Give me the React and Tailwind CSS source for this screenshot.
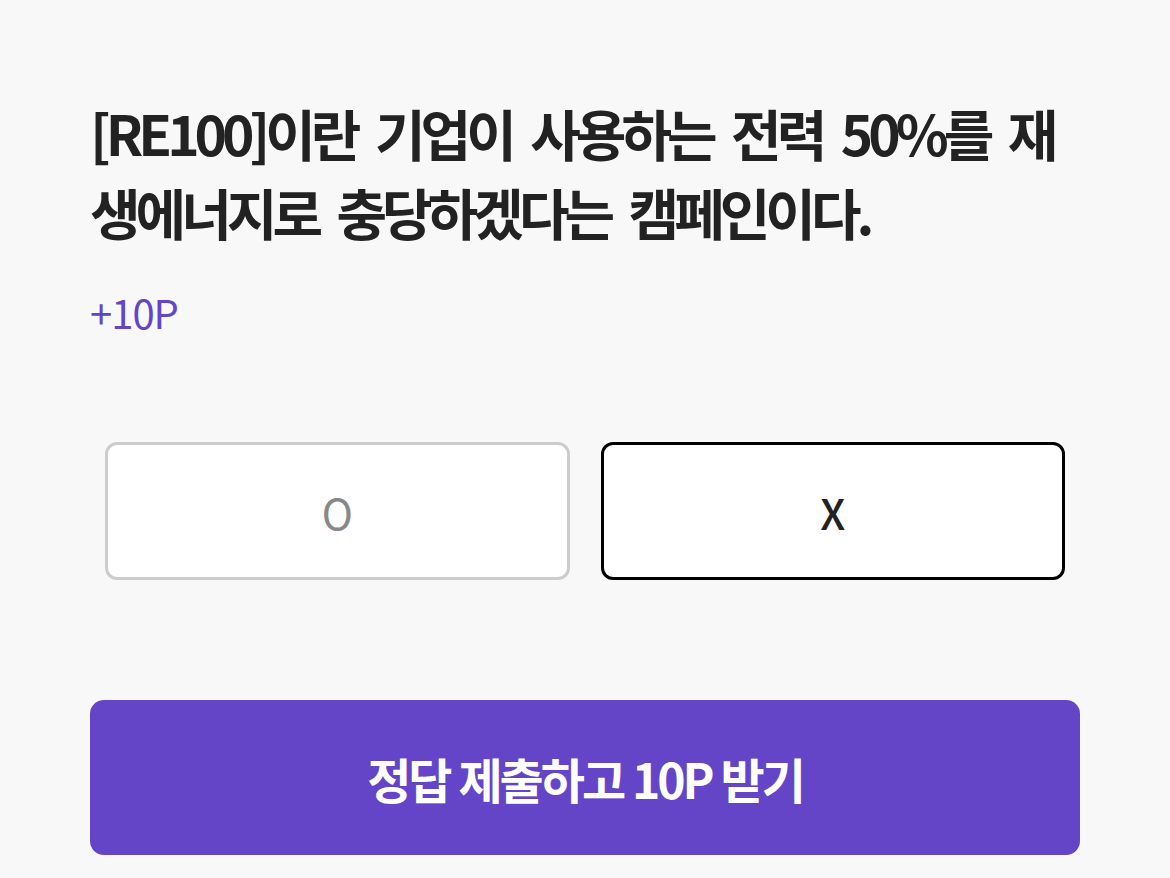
import React, { useState } from "react";

const FONT = { fontFamily: '"Noto Sans CJK KR", "Noto Sans", sans-serif' };

export default function App() {
  const [answer, setAnswer] = useState("X");

  return (
    <div className="min-h-screen bg-[#f8f8f8] px-[90px] pt-[93px]" style={FONT}>
      {/* Question */}
      <h1 className="text-[55px] font-bold leading-[79px] tracking-[-5px] [word-spacing:11px] text-[#222222]">
        [RE100]이란 기업이 사용하는 전력 50%를 재생에너지로 충당하겠다는 캠페인이다.
      </h1>
      <p className="mt-[35px] text-[40px] leading-[52px] tracking-[-1px] text-[#6445c8]">+10P</p>

      {/* O / X choices */}
      <div className="mx-[15px] mt-[104px] grid grid-cols-2 gap-[31px]">
        {["O", "X"].map((opt) => (
          <button
            key={opt}
            onClick={() => setAnswer(opt)}
            className={
              answer === opt
                ? "flex h-[138px] items-center justify-center rounded-[12px] border-[3px] border-black bg-white text-[42px] font-medium text-[#222222]"
                : "flex h-[138px] items-center justify-center rounded-[12px] border-[3px] border-[#cccccc] bg-white text-[42px] text-[#888888]"
            }
          >
            {opt}
          </button>
        ))}
      </div>

      {/* Submit */}
      <button className="mt-[120px] flex h-[155px] w-full items-center justify-center rounded-[14px] bg-[#6445c8] text-[48px] font-bold tracking-[-3px] [word-spacing:1px] text-white">
        정답 제출하고 10P 받기
      </button>
    </div>
  );
}
